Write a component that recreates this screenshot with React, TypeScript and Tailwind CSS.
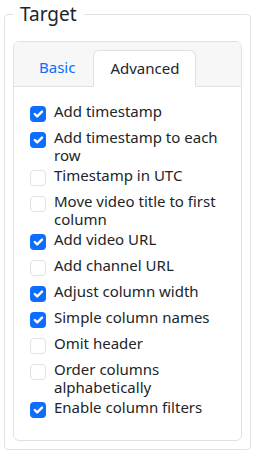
const options = [
  { label: "Add timestamp", checked: true },
  { label: "Add timestamp to each row", checked: true },
  { label: "Timestamp in UTC", checked: false },
  { label: "Move video title to first column", checked: false },
  { label: "Add video URL", checked: true },
  { label: "Add channel URL", checked: false },
  { label: "Adjust column width", checked: true },
  { label: "Simple column names", checked: true },
  { label: "Omit header", checked: false },
  { label: "Order columns alphabetically", checked: false },
  { label: "Enable column filters", checked: true },
];

function CheckBox({ checked }: { checked: boolean }) {
  if (checked) {
    return (
      <span className="mt-1 flex h-4 w-4 shrink-0 items-center justify-center rounded bg-[#0d6efd]">
        <svg viewBox="0 0 20 20" className="h-4 w-4">
          <path d="m6 10 3 3 6-6" fill="none" stroke="#fff" strokeWidth="3" strokeLinecap="round" strokeLinejoin="round" />
        </svg>
      </span>
    );
  }
  return <span className="mt-1 h-4 w-4 shrink-0 rounded border border-[#dee2e6] bg-white" />;
}

export default function App() {
  return (
    <div className="bg-white pb-2 pl-1 pr-[9px] text-[#212529]" style={{ fontFamily: '"Noto Sans", sans-serif' }}>
      <fieldset className="rounded border border-[#dee2e6] px-2 pb-2">
        <legend className="px-[7px] text-[19px] leading-[28px]">Target</legend>

        <div className="mt-[13px] overflow-hidden rounded-md border border-[#dee2e6]">
          {/* tabs */}
          <div className="flex border-b border-[#dee2e6] bg-[#f7f7f7] px-[9px] pt-2">
            <div className="-mb-px px-4 py-2 text-[15px] leading-[19px] text-[#0d6efd]">Basic</div>
            <div className="-mb-px ml-[2px] rounded-t-md border border-b-white border-[#dee2e6] bg-white px-4 py-2 text-[15px] leading-[19px]">
              Advanced
            </div>
          </div>

          {/* options */}
          <div className="px-4 pb-4 pt-[15px]">
            {options.map((opt) => (
              <div key={opt.label} className="mb-[2px] flex min-h-6 gap-2 text-[15px] leading-[18px]">
                <CheckBox checked={opt.checked} />
                <span>{opt.label}</span>
              </div>
            ))}
          </div>
        </div>
      </fieldset>
    </div>
  );
}
